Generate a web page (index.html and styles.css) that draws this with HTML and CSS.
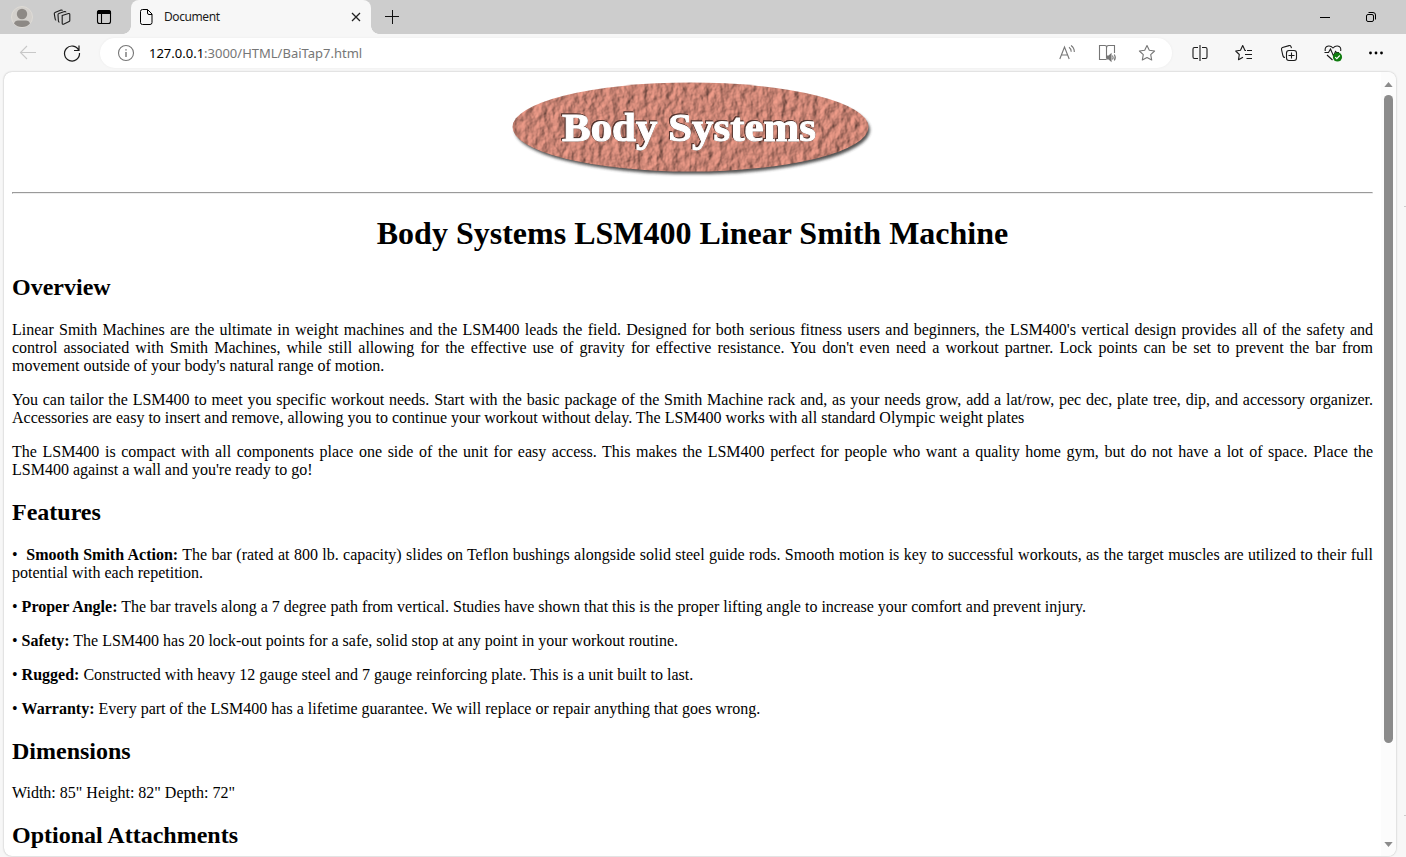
FILE: index.html
```html
<!DOCTYPE html>
<html lang="en">
<head>
<meta charset="utf-8">
<title>Document</title>
<link rel="stylesheet" href="styles.css">
</head>
<body>
<div class="browser">
  <header class="titlebar">
    <svg class="avatar" viewBox="0 0 22 22"><circle cx="11" cy="11" r="10.5" fill="#d3d0cc" stroke="#dedbd6"/><circle cx="11" cy="8" r="5.2" fill="#8d8985"/><path d="M3 17.5Q4 14.5 7 14.5h8q3 0 4 3Q16 21 11 21T3 17.500z" fill="#8d8985"/></svg>
    <svg class="icon workspaces" viewBox="0 0 20 20"><path d="M10.200 8.500 16.500 6.500q1.300-.3 1.300 1v6q0 .8-.7 1.100l-5.600 2.600q-1.300.4-1.300-1z"/><path d="M7.500 15.200q-1-.1-1.100-1.200L6 7.800q0-.9.900-1.200l5.600-2q1.300-.3 1.500.7M4.200 13.200q-.8-.1-1-1L2.300 6.800q-.1-.9.700-1.200l6-2.500q1.200-.3 1.500.5"/></svg>
    <svg class="icon tabmenu" viewBox="0 0 20 20"><rect x="3.500" y="3.500" width="13" height="13" rx="2"/><path d="M3.500 6.500V5.500q0-2 2-2h9q2 0 2 2v1z" fill="#000"/><path d="M7.500 7v9.500"/></svg>
    <div class="tab">
      <svg class="doc" viewBox="0 0 13 16"><path d="M2.500.500H7.500L12 5v8.500q0 2-2 2H2.500q-2 0-2-2v-11q0-2 2-2zM7.500.5V4q0 1.500 1.500 1.500h3"/></svg>
      <span class="tab-title">Document</span>
      <svg class="close" viewBox="0 0 10 10"><path d="M1 1l8 8M9 1L1 9"/></svg>
    </div>
    <svg class="plus" viewBox="0 0 14 14"><path d="M7.500 0v14M0 6.500h14"/></svg>
    <span class="grow"></span>
    <svg class="win minimize" viewBox="0 0 10 10"><path d="M0 5.500h10"/></svg>
    <svg class="win" viewBox="0 0 10 10"><rect x=".5" y="2.500" width="7" height="7" rx="1.500"/><path d="M2.500.5H7q2.500 0 2.500 2.500v4.500"/></svg>
  </header>

  <nav class="toolbar">
    <svg class="icon back" viewBox="0 0 20 20"><path d="M18 9.500H2.500M9 3 2.500 9.500 9 16"/></svg>
    <svg class="icon reload" viewBox="0 0 20 20"><path d="M16.800 7.300A7.500 7.500 0 1 0 17.500 10M17 2.500v5h-5" stroke-width="1.200"/></svg>
    <div class="address">
      <svg class="icon info" viewBox="0 0 20 20"><circle cx="10" cy="10" r="7.500"/><path d="M10 9v5M10 6.200v1.300" stroke-width="1.400"/></svg>
      <span class="url"><b>127.0.0.1</b>:3000/HTML/BaiTap7.html</span>
      <span class="grow"></span>
      <svg class="icon grey" viewBox="0 0 20 20"><path d="M2.800 16 7.500 4l4.700 12M4.300 12h6.500M12 4.300q2.300 1.500 2.200 4.500M14 2.500q3.400 2.200 3.300 6.500"/></svg>
      <svg class="icon grey" viewBox="0 0 20 20"><path d="M9.500 16.500H2.500v-14H8q1.500 0 1.500 1.500v11.500M9.500 5q0-2.500 2-2.500H17.500V10"/><path d="M10 13h2l2-2v7l-2-2h-2z" fill="#767676"/><path d="M15.500 12.500q1.200 2 0 4M17.300 11.500q2 3 0 6"/></svg>
      <svg class="icon grey" viewBox="0 0 20 20"><path d="M10 2.500 12.300 7.300 17.600 8 13.700 11.700 14.700 17 10 14.500 5.300 17 6.300 11.700 2.400 8 7.700 7.300z" stroke-linejoin="round"/></svg>
    </div>
    <svg class="icon" viewBox="0 0 20 20"><path d="M8 4.500H4.500q-1.500 0-1.500 1.500v8q0 1.500 1.500 1.500H8M12 4.500h3.500q1.500 0 1.500 1.500v8q0 1.500-1.500 1.500H12M10 2v16"/></svg>
    <svg class="icon" viewBox="0 0 20 20"><path d="M12 7.500H11L8.700 2.500 6.500 7.300 1.700 8 5.300 11.500 4.500 16.700 9 14.300M13 7.500h5M11 11.500h7M12.500 15.500h5.500" stroke-linejoin="round"/></svg>
    <svg class="icon" viewBox="0 0 20 20"><rect x="7.500" y="7.500" width="10" height="10" rx="2.500"/><path d="M12.500 9.500v6M9.500 12.500h6M6 14.500q-1.500 0-2-1.500L2.500 6.500q-.3-1.500 1-2L10 2.600q1.500-.3 2 1l.5 1.600"/></svg>
    <svg class="icon" viewBox="0 0 20 20"><path d="M2.200 8Q1.500 3.500 5.500 3 8 2.700 10 5q2-2.300 4.500-2Q18.500 3.500 17.700 8M1.500 9.500h4l2-3.500 3 7 2-4.500 1 1H16M4 12l5.500 5"/><circle cx="14.500" cy="14" r="4.600" fill="#107c10" stroke="none"/><path d="M12.200 14.200l1.600 1.500 3-3.200" stroke="#fff"/></svg>
    <svg class="icon more" viewBox="0 0 20 20"><g fill="#000" stroke="none"><circle cx="4.500" cy="10" r="1.400"/><circle cx="10" cy="10" r="1.400"/><circle cx="15.500" cy="10" r="1.400"/></g></svg>
  </nav>

  <div class="viewport">
    <main class="page">
      <svg class="logo" viewBox="0 0 370 104" role="img">
        <defs>
          <filter id="stone" x="0" y="0" width="100%" height="100%" color-interpolation-filters="sRGB">
            <feTurbulence type="fractalNoise" baseFrequency="0.13 0.1" numOctaves="4" seed="21" result="noise"/>
            <feDiffuseLighting in="noise" surfaceScale="1.700" diffuseConstant="1.200" lighting-color="#cd8676" result="light"><feDistantLight azimuth="205" elevation="55"/></feDiffuseLighting>
            <feComposite in="light" in2="SourceGraphic" operator="in"/>
          </filter>
          <filter id="shadow" x="-5%" y="-10%" width="110%" height="130%"><feGaussianBlur stdDeviation="1.800"/></filter>
        </defs>
        <ellipse cx="184.500" cy="50" rx="177.500" ry="44" fill="#333" opacity=".85" filter="url(#shadow)"/>
        <ellipse cx="182.500" cy="47" rx="178" ry="44.500" fill="#cf8b7b" filter="url(#stone)"/>
        <text class="logo-text" x="54" y="60.500" textLength="254" lengthAdjust="spacingAndGlyphs">Body Systems</text>
      </svg>
      <hr>
      <h1>Body Systems LSM400 Linear Smith Machine</h1>
      <h2>Overview</h2>
      <p>Linear Smith Machines are the ultimate in weight machines and the LSM400 leads the field. Designed for both serious fitness users and beginners, the LSM400's vertical design provides all of the safety and control associated with Smith Machines, while still allowing for the effective use of gravity for effective resistance. You don't even need a workout partner. Lock points can be set to prevent the bar from movement outside of your body's natural range of motion.</p>
      <p>You can tailor the LSM400 to meet you specific workout needs. Start with the basic package of the Smith Machine rack and, as your needs grow, add a lat/row, pec dec, plate tree, dip, and accessory organizer. Accessories are easy to insert and remove, allowing you to continue your workout without delay. The LSM400 works with all standard Olympic weight plates</p>
      <p>The LSM400 is compact with all components place one side of the unit for easy access. This makes the LSM400 perfect for people who want a quality home gym, but do not have a lot of space. Place the LSM400 against a wall and you're ready to go!</p>
      <h2>Features</h2>
      <p>•&nbsp; <b>Smooth Smith Action:</b> The bar (rated at 800 lb. capacity) slides on Teflon bushings alongside solid steel guide rods. Smooth motion is key to successful workouts, as the target muscles are utilized to their full potential with each repetition.</p>
      <p>• <b>Proper Angle:</b> The bar travels along a 7 degree path from vertical. Studies have shown that this is the proper lifting angle to increase your comfort and prevent injury.</p>
      <p>• <b>Safety:</b> The LSM400 has 20 lock-out points for a safe, solid stop at any point in your workout routine.</p>
      <p>• <b>Rugged:</b> Constructed with heavy 12 gauge steel and 7 gauge reinforcing plate. This is a unit built to last.</p>
      <p>• <b>Warranty:</b> Every part of the LSM400 has a lifetime guarantee. We will replace or repair anything that goes wrong.</p>
      <h2>Dimensions</h2>
      <p>Width: 85" Height: 82" Depth: 72"</p>
      <h2>Optional Attachments</h2>
    </main>
    <div class="scrollbar">
      <svg viewBox="0 0 10 6"><path d="M0 6 5 0l5 6z"/></svg>
      <div class="thumb"></div>
      <span class="grow"></span>
      <svg viewBox="0 0 10 6"><path d="M0 0 5 6l5-6z"/></svg>
    </div>
  </div>
  <i class="edge-mark upper"></i>
  <i class="edge-mark lower"></i>
</div>
</body>
</html>
```
FILE: styles.css
```css
* { box-sizing: border-box; }
body { margin: 0; }
svg { display: block; flex: none; }

.browser {
  position: relative;
  width: 1406px;
  height: 857px;
  overflow: hidden;
  background: #f7f7f7;
  display: flex;
  flex-direction: column;
  font-family: "Noto Sans", sans-serif;
}
.grow { flex: 1; }
.icon { width: 20px; height: 20px; fill: none; stroke: #1b1b1b; stroke-width: 1.100; }

.titlebar {
  height: 34px;
  flex: none;
  display: flex;
  align-items: center;
  padding: 0 30px 0 11px;
  background: #cdcdcd;
}
.avatar { width: 22px; height: 22px; }
.workspaces { margin-left: 19px; }
.tabmenu { margin: 0 17px 0 22px; stroke: #000; }
.tab {
  position: relative;
  width: 240px;
  height: 34px;
  display: flex;
  align-items: center;
  padding: 0 10.500px 0 9px;
  background: #f7f7f7;
  border-radius: 8px 8px 0 0;
}
.tab::before, .tab::after {
  content: "";
  position: absolute;
  bottom: 0;
  width: 8px;
  height: 8px;
}
.tab::before { left: -8px; background: radial-gradient(circle at 0 0, #cdcdcd 7.500px, #f7f7f7 8px); }
.tab::after { right: -8px; background: radial-gradient(circle at 100% 0, #cdcdcd 7.500px, #f7f7f7 8px); }
.doc { width: 13px; height: 16px; fill: none; stroke: #000; }
.tab-title { flex: 1; margin-left: 11px; font-size: 12px; letter-spacing: -.42px; color: #1b1b1b; line-height: 16px; }
.close { width: 10px; height: 10px; stroke: #222; stroke-width: 1.300; }
.plus { width: 14px; height: 14px; margin-left: 14px; stroke: #111; }
.win { width: 10px; height: 10px; fill: none; stroke: #000; }
.minimize { margin-right: 36px; }

.toolbar {
  height: 38px;
  flex: none;
  display: flex;
  align-items: center;
  padding: 0 18px;
  gap: 24.500px;
}
.back { stroke: #c8c8c8; }
.reload { margin-left: -.5px; }
.more { margin-left: -1.500px; }
.address {
  width: 1072px;
  height: 30px;
  flex: none;
  margin: 0 -7px 0 -6.500px;
  display: flex;
  align-items: center;
  gap: 20px;
  padding: 0 15px 0 16px;
  border-radius: 15px;
  background: #fff;
  box-shadow: 0 0 3px rgba(0, 0, 0, .05);
}
.info, .grey { stroke: #767676; }
.url { margin-left: -7px; font-size: 13px; color: #767676; white-space: nowrap; }
.url b { font-weight: 400; color: #000; }

.viewport {
  width: 1392px;
  height: 784px;
  margin-left: 4px;
  flex: none;
  display: flex;
  overflow: hidden;
  background: #fff;
  border-radius: 8px;
  box-shadow: 0 0 2px rgba(0, 0, 0, .3);
}
.page {
  width: 1377px;
  flex: none;
  padding: 8px;
  font: 16px/18px "Liberation Serif", serif;
  color: #000;
}
.logo { width: 370px; height: 104px; margin: 0 auto; }
.logo-text {
  font: bold 39px "Liberation Serif", serif;
  fill: #fff;
  stroke: #fff;
  stroke-width: 1px;
  filter: drop-shadow(.8px .8px .3px #54352f) drop-shadow(-.6px -.6px .3px #54352f);
}
.page hr { margin: 8px 0; }
.page h1 { margin: 21.440px 0; font-size: 32px; line-height: 37px; text-align: center; }
.page h2 { margin: 19.920px 0; font-size: 24px; line-height: 27px; }
.page p { margin: 16px 0; text-align: justify; }

.scrollbar {
  width: 15px;
  display: flex;
  flex-direction: column;
  align-items: center;
  padding: 10px 0 9px;
  background: #fcfcfc;
}
.scrollbar svg { width: 9px; height: 5px; fill: #8b8b8b; }
.thumb { width: 9px; height: 648px; margin-top: 8px; border-radius: 5px; background: #8b8b8b; }

.edge-mark { position: absolute; right: 0; width: 2px; height: 1px; background: #ccc; }
.upper { top: 206px; }
.lower { top: 815px; }
```
